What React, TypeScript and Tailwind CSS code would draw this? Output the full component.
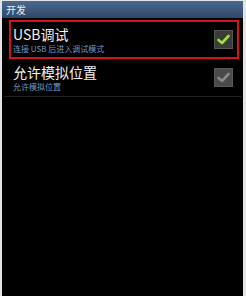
import React from "react";

type Item = {
  title: string;
  summary: string;
  checked: boolean;
  highlighted: boolean;
};

const items: Item[] = [
  { title: "USB调试", summary: "连接 USB 后进入调试模式", checked: true, highlighted: true },
  { title: "允许模拟位置", summary: "允许模拟位置", checked: false, highlighted: false },
];

const CheckBox: React.FC<{ on: boolean }> = ({ on }) => (
  <div
    className={`w-[19px] h-[19px] flex items-center justify-center border ${
      on ? "bg-[#3a3d36] border-[#55584f]" : "bg-[#4a4a4a] border-[#5a5a5a]"
    }`}
  >
    <svg width="13" height="11" viewBox="0 0 13 11">
      <path
        d="M1.5 6 L5 9 L11.5 2"
        fill="none"
        stroke={on ? "#9fe03a" : "#8a8a8a"}
        strokeWidth="2.6"
        strokeLinecap="round"
        strokeLinejoin="round"
      />
    </svg>
  </div>
);

export default function App() {
  return (
    <div
      className="w-[246px] h-[296px] bg-[#e4e4e4] pl-[2px] pr-[3px] pt-[1px] overflow-hidden"
      style={{ fontFamily: '"Noto Sans CJK SC", "Noto Sans", sans-serif' }}
    >
      <div className="h-full bg-black flex flex-col">
        {/* Title bar */}
        <div className="h-[17px] bg-gradient-to-b from-[#4b6a91] to-[#304866] flex items-center px-[4px]">
          <span className="text-[10px] leading-none text-[#e8eef6]">开发</span>
        </div>

        {/* Preferences */}
        <div className="mt-[2px] flex flex-col">
          {items.map((item) => (
            <div
              key={item.title}
              className={`ml-[7px] mr-[4px] border-2 flex items-center justify-between pl-[2px] pr-[4px] ${
                item.highlighted ? "border-[#d5121a] h-[39px]" : "border-transparent h-[37px]"
              }`}
            >
              <div className="flex flex-col">
                <span className="text-[14px] leading-[17px] text-[#f2f2f2]">{item.title}</span>
                <span className="text-[8px] leading-[11px] text-[#6f9bc9]">{item.summary}</span>
              </div>
              <CheckBox on={item.checked} />
            </div>
          ))}
          <div className="h-px bg-[#202020] mx-[2px]" />
        </div>
      </div>
    </div>
  );
}
